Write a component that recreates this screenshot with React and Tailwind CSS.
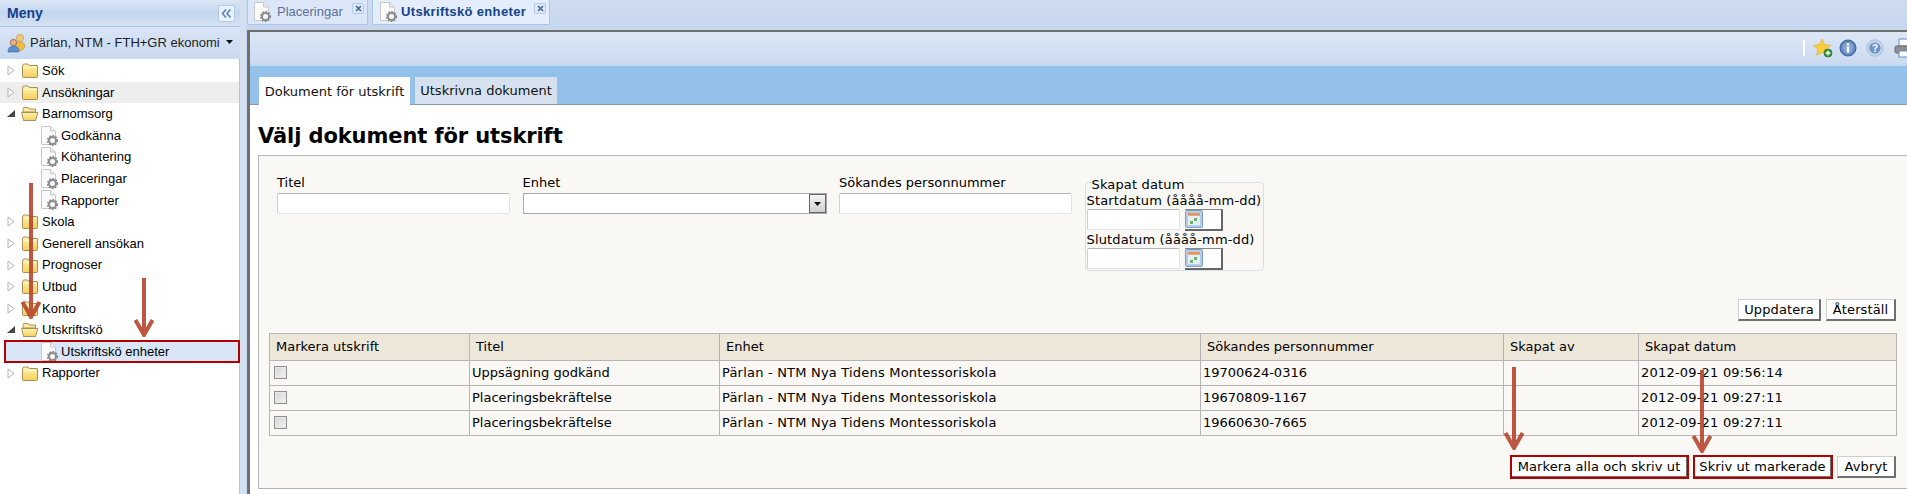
import React from "react";

const Folder = ({ open }) => (
  <svg width="18" height="17" viewBox="0 0 18 17" className="shrink-0">
    <defs>
      <linearGradient id="fg" x1="0" y1="0" x2="0" y2="1">
        <stop offset="0" stopColor="#fff3b0" />
        <stop offset="1" stopColor="#f6cf5c" />
      </linearGradient>
    </defs>
    {open ? (
      <>
        <path d="M2 4.5 L2.8 2.5 H7 L8.2 4 H14.5 V7 H2Z" fill="#fbe9a0" stroke="#a8905a" strokeWidth="1" />
        <path d="M0.7 7.5 H16.8 L14.5 15.5 H2.5Z" fill="url(#fg)" stroke="#a8905a" strokeWidth="1" />
      </>
    ) : (
      <>
        <path d="M1.5 4 L2.5 2 H7 L8.2 3.5 H16 Q16.5 3.5 16.5 4 V14.5 Q16.5 15.5 15.5 15.5 H2.5 Q1.5 15.5 1.5 14.5Z" fill="url(#fg)" stroke="#a8905a" strokeWidth="1" />
        <path d="M2.5 5.5 H15.5" stroke="#fff8d0" strokeWidth="1" />
      </>
    )}
  </svg>
);

const Gear = ({ cx, cy, r }) => (
  <g>
    <circle cx={cx} cy={cy} r={r} fill="none" stroke="#7f7f7f" strokeWidth="1.8" strokeDasharray="1.7 1.3" />
    <circle cx={cx} cy={cy} r={r - 1.1} fill="none" stroke="#8e8e8e" strokeWidth="2" />
    <circle cx={cx} cy={cy} r="1.2" fill="#f4f4f4" />
  </g>
);

const DocGear = () => (
  <svg width="20" height="20" viewBox="0 0 20 20" className="shrink-0">
    <path d="M1.5 0.5 H10.5 L15.5 5 V18.5 H1.5Z" fill="#fbfbfb" stroke="#c9c9c9" />
    <path d="M10.5 0.5 V5 H15.5" fill="#e9e9e9" stroke="#c9c9c9" />
    <Gear cx={12.5} cy={14.5} r={4.6} />
  </svg>
);

const TriClosed = () => (
  <svg width="8" height="11" viewBox="0 0 8 11" className="shrink-0">
    <path d="M1 1 L7 5.5 L1 10Z" fill="#fff" stroke="#b4b4b4" />
  </svg>
);
const TriOpen = () => (
  <svg width="8" height="8" viewBox="0 0 8 8" className="shrink-0">
    <path d="M8 0 V7 H0Z" fill="#444" />
  </svg>
);

const Row = ({ icon, label, indent, bg, hl }) => (
  <div className={`h-[21.6px] flex items-center font-['Liberation_Sans',sans-serif] text-[13px] text-black ${bg || ""} ${hl ? "bg-[#d8e6f8] outline-2 -outline-offset-1 outline-[#b40000] ml-[5px] mr-0" : ""}`}>
    {indent ? (
      <div className={`flex items-center gap-[1px] ${hl ? "pl-[35px]" : "pl-[40px]"}`}>
        <DocGear />
        <span>{label}</span>
      </div>
    ) : (
      <div className="flex items-center pl-[7px]">
        <span className="w-[14px] flex justify-start">{icon === "open" ? <TriOpen /> : <TriClosed />}</span>
        <Folder open={icon === "open"} />
        <span className="ml-[3px]">{label}</span>
      </div>
    )}
  </div>
);

const Sidebar = () => (
  <div className="w-[246px] shrink-0 h-full flex flex-col bg-[#d3e0f2]">
    <div className="h-[27px] shrink-0 flex items-center justify-between pl-[7px] pr-[5px] border-b border-[#a9c7ee] bg-[linear-gradient(#dce7f6_0%,#c3d5ee_50%,#d6e2f3_100%)] mr-[6px]">
      <span className="font-['Liberation_Sans',sans-serif] font-bold text-[14px] text-[#15428b]">Meny</span>
      <span className="w-[17px] h-[17px] rounded-[2px] bg-[#e9f1fb] border border-[#b4cbe8] flex items-center justify-center">
        <svg width="11" height="9" viewBox="0 0 11 9">
          <path d="M5 0.5 L1.5 4.5 L5 8.5 M9.5 0.5 L6 4.5 L9.5 8.5" fill="none" stroke="#5b84bd" strokeWidth="1.6" />
        </svg>
      </span>
    </div>
    <div className="h-[32px] shrink-0 flex items-center pl-[7px] mr-[6px] bg-[linear-gradient(#d9e5f5,#c9d9ef)] font-['Liberation_Sans',sans-serif] text-[13px] text-[#222]">
      <svg width="20" height="20" viewBox="0 0 20 20" className="shrink-0">
        <circle cx="13" cy="5" r="3.6" fill="#f3c877" stroke="#b58a3c" strokeWidth="0.6" />
        <path d="M8 15 Q8 9 13 9 Q18 9 18 14 L14 18Z" fill="#eebc3f" stroke="#b58a3c" strokeWidth="0.6" />
        <circle cx="6.5" cy="9.5" r="3.2" fill="#e8b07c" stroke="#7a4a2a" strokeWidth="0.6" />
        <path d="M1 19 Q1 13 6.5 13 Q12 13 12 19Z" fill="#5c8fd0" stroke="#3b659e" strokeWidth="0.6" />
      </svg>
      <span className="ml-[3px]">Pärlan, NTM - FTH+GR ekonomi</span>
      <svg width="7" height="4" viewBox="0 0 7 4" className="ml-[6px] mb-[3px]"><path d="M0 0 H7 L3.5 4Z" fill="#111" /></svg>
    </div>
    <div className="flex-1 flex">
      <div className="w-[240px] shrink-0 bg-white border-r border-[#a9c7ee] pt-[1px] relative">
        <Row icon="closed" label="Sök" />
        <Row icon="closed" label="Ansökningar" bg="bg-[#eeeeee]" />
        <Row icon="open" label="Barnomsorg" />
        <Row indent label="Godkänna" />
        <Row indent label="Köhantering" />
        <Row indent label="Placeringar" />
        <Row indent label="Rapporter" />
        <Row icon="closed" label="Skola" />
        <Row icon="closed" label="Generell ansökan" />
        <Row icon="closed" label="Prognoser" />
        <Row icon="closed" label="Utbud" />
        <Row icon="closed" label="Konto" />
        <Row icon="open" label="Utskriftskö" />
        <Row indent hl label="Utskriftskö enheter" />
        <Row icon="closed" label="Rapporter" />
      </div>
    </div>
  </div>
);

const TabClose = () => (
  <span className="w-[12px] h-[11px] rounded-[2px] bg-[#dfe9f7] border border-[#b4cbe8] flex items-center justify-center self-start mt-[3px]">
    <svg width="7" height="7" viewBox="0 0 7 7"><path d="M1 1 L6 6 M6 1 L1 6" stroke="#4a6a9a" strokeWidth="1.7" /></svg>
  </span>
);

const TopTabs = () => (
  <div className="h-[30px] shrink-0 bg-[linear-gradient(#cfdcf0,#c6d6ed)] flex items-start gap-[4px] relative">
    <div className="h-[25px] w-[121px] ml-[1px] flex items-center pl-[5px] pr-[3px] bg-[#dbe7f8] border-x border-b border-[#a9c7ee] rounded-b-[2px] font-['Liberation_Sans',sans-serif] text-[13px] text-[#5d7396]">
      <DocGear />
      <span className="ml-[4px] flex-1">Placeringar</span>
      <TabClose />
    </div>
    <div className="h-[25px] w-[178px] flex items-center pl-[6px] pr-[3px] bg-[#e3edfb] border-x border-b border-[#a9c7ee] rounded-b-[2px] font-['Liberation_Sans',sans-serif] font-bold text-[13px] tracking-[0.35px] text-[#15428b]">
      <DocGear />
      <span className="ml-[2px] flex-1">Utskriftskö enheter</span>
      <TabClose />
    </div>
  </div>
);

const Toolbar = () => (
  <div className="h-[34px] shrink-0 bg-[linear-gradient(#dde7f6,#cbdaf0)] border-t-[2px] border-t-[#6f6f6f] flex items-center justify-end overflow-hidden">
    <span className="w-[2px] h-[16px] bg-white mr-[8px]" />
    <svg width="20" height="20" viewBox="0 0 20 20" className="shrink-0">
      <path d="M9 1 L11.6 6.6 L17.6 7.3 L13.2 11.3 L14.4 17.3 L9 14.3 L3.6 17.3 L4.8 11.3 L0.4 7.3 L6.4 6.6Z" fill="#f7cd3c" stroke="#e0a92a" strokeWidth="0.6" />
      <circle cx="15" cy="15" r="4" fill="#3f9a3f" stroke="#23692a" strokeWidth="0.7" />
      <path d="M12.7 15 H17.3 M15 12.7 V17.3" stroke="#fff" strokeWidth="1.4" />
    </svg>
    <svg width="18" height="18" viewBox="0 0 18 18" className="shrink-0 ml-[6px]">
      <circle cx="9" cy="9" r="8" fill="#5d87bd" stroke="#3c639c" />
      <circle cx="9" cy="9" r="5.5" fill="#7fa3d0" />
      <rect x="7.8" y="7.5" width="2.4" height="6" fill="#fff" />
      <rect x="7.8" y="4.2" width="2.4" height="2.2" fill="#fff" />
    </svg>
    <svg width="18" height="18" viewBox="0 0 18 18" className="shrink-0 ml-[9px]">
      <circle cx="9" cy="9" r="8.2" fill="#c3d3ea" stroke="#a8bfde" />
      <circle cx="9" cy="9" r="5.6" fill="#6e94c6" />
      <text x="9" y="12.5" textAnchor="middle" fontFamily="Liberation Sans" fontWeight="bold" fontSize="10" fill="#fff">?</text>
    </svg>
    <svg width="20" height="20" viewBox="0 0 20 20" className="shrink-0 ml-[10px] -mr-[7px]">
      <path d="M5 8 V1 H13 L16 4 V8Z" fill="#fff" stroke="#5d8ccc" />
      <rect x="1" y="8" width="18" height="7" rx="1.5" fill="#8f8f8f" stroke="#666" />
      <rect x="5" y="13" width="11" height="6" fill="#fff" stroke="#5d8ccc" />
    </svg>
  </div>
);

const Btn = ({ children, w, hl }) => (
  <button className={`${w} h-[22px] bg-white text-black tracking-[0.1px] flex items-center justify-center border-t border-l border-[#cfcfcf] border-r-[2px] border-b-[2px] border-r-[#6f6f6f] border-b-[#6f6f6f] ${hl ? "outline-2 -outline-offset-1 outline-[#b40000]" : ""}`}>
    {children}
  </button>
);

const Calendar = () => (
  <svg width="18" height="18" viewBox="0 0 18 18" className="shrink-0">
    <rect x="0.5" y="0.5" width="17" height="17" rx="1" fill="#b6cdea" stroke="#7c9dc9" />
    <rect x="3" y="3" width="12" height="2.5" fill="#f0934a" />
    <rect x="3" y="6" width="12" height="9" fill="#e8eef4" />
    <rect x="9" y="8" width="3" height="3" fill="#6bb86b" />
    <rect x="5" y="11" width="3" height="3" fill="#6bb86b" />
  </svg>
);

const DateBtn = () => (
  <div className="w-[38px] h-[22px] bg-white border-r-[2px] border-b-[2px] border-r-[#666] border-b-[#666] border-t border-t-[#888] flex items-start shrink-0">
    <Calendar />
  </div>
);

const inputCls = "block h-[21px] bg-white border border-[#dfe3ea] border-t-[#b5b5b5] border-l-[#cfcfcf] rounded-[2px] outline-none";

const Filters = () => (
  <div className="flex gap-[12.5px] pl-[18px] h-[146px] pt-[20px] items-start">
    <div className="w-[233px]">
      <div className="leading-[14px]">Titel</div>
      <input className={`${inputCls} w-full mt-[3px]`} />
    </div>
    <div className="w-[304px]">
      <div className="leading-[14px]">Enhet</div>
      <div className="h-[21px] mt-[3px] w-full bg-white border border-[#a8a8ae] flex justify-end">
        <span className="w-[17px] h-[19px] bg-[linear-gradient(#f5f5f5,#cfcfcf)] border border-[#666] flex items-center justify-center">
          <svg width="7" height="4" viewBox="0 0 7 4"><path d="M0 0 H7 L3.5 4Z" fill="#111" /></svg>
        </span>
      </div>
    </div>
    <div className="w-[233px]">
      <div className="leading-[14px]">Sökandes personnummer</div>
      <input className={`${inputCls} w-full mt-[3px]`} />
    </div>
    <fieldset className="w-[179px] h-[92px] border border-[#d5dee9] rounded-[4px] pl-[1px] mt-[3px] leading-[14px] tracking-[0.15px]">
      <legend className="ml-[4px] px-[1px] h-[6px] leading-[6px] relative top-[3px]">Skapat datum</legend>
      <div className="mt-[9px]">Startdatum (åååå-mm-dd)</div>
      <div className="flex gap-[5px] mt-[1px]">
        <input className={`${inputCls} w-[93px] h-[20px]`} />
        <DateBtn />
      </div>
      <div className="mt-[2px]">Slutdatum (åååå-mm-dd)</div>
      <div className="flex gap-[5px] mt-[1px]">
        <input className={`${inputCls} w-[93px] h-[20px]`} />
        <DateBtn />
      </div>
    </fieldset>
  </div>
);

const rows = [
  ["Uppsägning godkänd", "19700624-0316", "2012-09-21 09:56:14"],
  ["Placeringsbekräftelse", "19670809-1167", "2012-09-21 09:27:11"],
  ["Placeringsbekräftelse", "19660630-7665", "2012-09-21 09:27:11"],
];

const Th = ({ children }) => (
  <th className="h-[27px] border border-[#b5b5b5] bg-[#ede7da] pl-[6px] text-left font-normal">{children}</th>
);
const Td = ({ children, wide }) => (
  <td className={`h-[25px] border border-[#b5b5b5] pl-[2px] align-middle ${wide ? "tracking-[0.2px]" : ""}`}>{children}</td>
);

const DocTable = () => (
  <table className="table-fixed border-collapse w-[1627px] ml-[10px] text-black">
    <colgroup>
      <col className="w-[200px]" />
      <col className="w-[250px]" />
      <col className="w-[481px]" />
      <col className="w-[303px]" />
      <col className="w-[135px]" />
      <col className="w-[258px]" />
    </colgroup>
    <thead>
      <tr>
        <Th>Markera utskrift</Th><Th>Titel</Th><Th>Enhet</Th><Th>Sökandes personnummer</Th><Th>Skapat av</Th><Th>Skapat datum</Th>
      </tr>
    </thead>
    <tbody>
      {rows.map((r, i) => (
        <tr key={i}>
          <td className="h-[25px] border border-[#b5b5b5] pl-[4px] align-top pt-[5px]">
            <span className="block w-[13px] h-[13px] border border-[#8f8f8f] bg-[linear-gradient(135deg,#d4d4d4,#f5f5f5)] outline outline-1 -outline-offset-2 outline-[#e8e8e8]" />
          </td>
          <Td>{r[0]}</Td>
          <Td wide>Pärlan - NTM Nya Tidens Montessoriskola</Td>
          <Td>{r[1]}</Td>
          <Td></Td>
          <Td wide>{r[2]}</Td>
        </tr>
      ))}
    </tbody>
  </table>
);

const Arrow = ({ cls, h }) => (
  <svg width="20" height={h} viewBox={`0 0 20 ${h}`} className={`absolute pointer-events-none opacity-90 ${cls}`}>
    <path d={`M10 0 V${h - 4}`} stroke="#b8452f" strokeWidth="4" />
    <path d={`M1.5 ${h - 17} L10 ${h - 2} L18.5 ${h - 17}`} fill="none" stroke="#b8452f" strokeWidth="4" />
  </svg>
);

const Main = () => (
  <div className="flex-1 h-full flex flex-col min-w-0 bg-[#c8d8ef]">
    <TopTabs />
    <div className="flex-1 flex flex-col border-l-[3px] border-l-[#6f6f6f] min-h-0 ml-[1px]">
      <Toolbar />
      <div className="h-[41px] shrink-0 bg-[#93c1e9] border-t-[2px] border-t-[#fff]/40 flex items-end pl-[9px] gap-[5px] border-b border-b-[#8f9aa5] font-['DejaVu_Sans',sans-serif] text-[13px] text-[#111]">
        <div className="h-[28px] -mb-[1px] w-[151px] pt-[1px] bg-white flex items-center justify-center">Dokument för utskrift</div>
        <div className="h-[27px] w-[142px] pt-[1px] bg-[#d5e1ef] flex items-center justify-center">Utskrivna dokument</div>
      </div>
      <div className="flex-1 bg-white pl-[8px] pt-[17px] font-['DejaVu_Sans',sans-serif] text-[13px] text-black min-h-0">
        <h1 className="font-bold text-[21px] tracking-[-0.1px] leading-[26px] h-[33px] pt-[1px] text-black">Välj dokument för utskrift</h1>
        <div className="h-[334px] bg-[#f9f8f4] border-t border-b border-l border-[#b5b5b5]">
          <Filters />
          <div className="flex justify-end gap-[5px] pr-[11px] h-[34px] -mt-[3px]">
            <Btn w="w-[83px]">Uppdatera</Btn>
            <Btn w="w-[70px]">Återställ</Btn>
          </div>
          <DocTable />
          <div className="flex justify-end items-center gap-[5px] pr-[11px] mt-[20px]">
            <Btn w="w-[177px] mr-[1px]" hl>Markera alla och skriv ut</Btn>
            <Btn w="w-[138px]" hl>Skriv ut markerade</Btn>
            <Btn w="w-[59px]">Avbryt</Btn>
          </div>
        </div>
      </div>
    </div>
  </div>
);

export default function App() {
  return (
    <div className="relative w-[1907px] h-[494px] flex overflow-hidden bg-white">
      <Sidebar />
      <Main />
      <Arrow cls="left-[21px] top-[183px]" h={136} />
      <Arrow cls="left-[134px] top-[278px]" h={59} />
      <Arrow cls="left-[1504px] top-[367px]" h={83} />
      <Arrow cls="left-[1692px] top-[370px]" h={83} />
    </div>
  );
}
